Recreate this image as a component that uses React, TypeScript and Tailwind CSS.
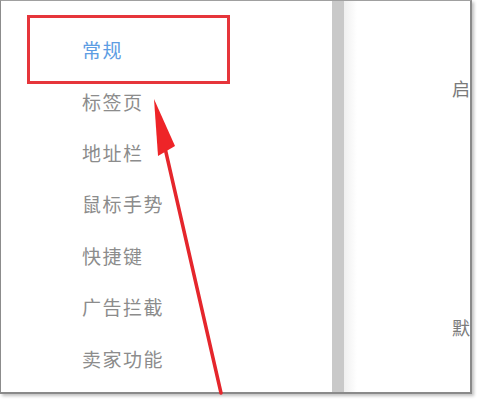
import React from "react";

const items = ["常规", "标签页", "地址栏", "鼠标手势", "快捷键", "广告拦截", "卖家功能"];

export default function App() {
  return (
    <div
      className="relative w-[478px] h-[400px] bg-white overflow-hidden"
      style={{ fontFamily: '"Noto Sans CJK SC", "Noto Sans", sans-serif' }}
    >
      <div className="flex w-[472px] h-[394px] border-t border-l border-t-[#a0a0a0] border-l-[#8c8c8c] border-r-2 border-b-2 border-r-[#8a8a8a] border-b-[#8a8a8a] shadow-[2px_2px_3px_rgba(0,0,0,0.25)]">
        <div className="w-[331px] h-full bg-white pt-[23px] pl-[81px] flex flex-col">
          {items.map((t, i) => (
            <div
              key={t}
              className={`h-[51.4px] flex items-center text-[19px] tracking-[1.5px] leading-none ${
                i === 0 ? "text-[#5d9de3]" : "text-[#8c8c8c]"
              }`}
            >
              {t}
            </div>
          ))}
        </div>
        <div className="w-[12px] h-full bg-[#c9c9c9]" />
        <div className="flex-1 h-full overflow-hidden bg-[linear-gradient(to_right,#efefef,#ffffff_13px)] pl-[108px] flex flex-col">
          <div className="mt-[78px] text-[18px] leading-none whitespace-nowrap text-[#7a7a7a]">启动时</div>
          <div className="mt-[221px] text-[18px] leading-none whitespace-nowrap text-[#7a7a7a]">默认浏览器</div>
        </div>
      </div>

      <div className="absolute left-[27px] top-[15px] w-[203px] h-[69px] border-[3px] border-[#e6353b]" />

      <svg className="absolute left-0 top-0" width="478" height="400" viewBox="0 0 478 400">
        <line x1="165" y1="148" x2="221" y2="393" stroke="#e5262c" strokeWidth="3.5" strokeLinecap="round" />
        <polygon points="154,99 175,146 158,156" fill="#ee2428" />
      </svg>
    </div>
  );
}
